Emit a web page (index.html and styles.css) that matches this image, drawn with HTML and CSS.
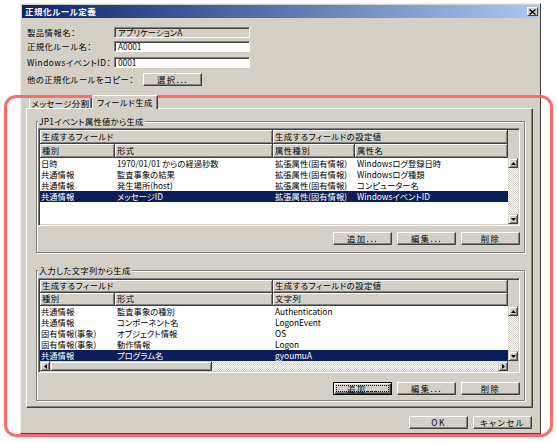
FILE: index.html
```html
<!DOCTYPE html>
<html lang="ja">
<head>
<meta charset="UTF-8">
<title>正規化ルール定義</title>
<link rel="stylesheet" href="styles.css">
</head>
<body>

<div class="window">
  <div class="titlebar">
    <span class="title">正規化ルール定義</span>
    <span class="close"><svg width="7" height="6" viewBox="0 0 7 6"><path d="M0.5 0.5 L6.5 5.5 M6.5 0.5 L0.5 5.5" stroke="#000" stroke-width="1.5"/></svg></span>
  </div>

  <div class="content">
    <div class="form">
      <div class="frow"><span class="flabel">製品情報名：</span><span class="field readonly">アプリケーションA</span></div>
      <div class="frow"><span class="flabel">正規化ルール名：</span><span class="field">A0001</span></div>
      <div class="frow"><span class="flabel">WindowsイベントID：</span><span class="field">0001</span></div>
      <div class="frow copy"><span class="flabel">他の正規化ルールをコピー：</span><span class="btn">選択...</span></div>
    </div>

    <div class="tabs">
      <div class="tab">メッセージ分割</div>
      <div class="tab active">フィールド生成</div>
    </div>

    <div class="panel">
      <!-- JP1イベント属性値から -->
      <div class="group">
        <div class="group-title">JP1イベント属性値から生成</div>
        <div class="list list-attr">
          <div class="hrow">
            <div class="hcell w-field">生成するフィールド</div>
            <div class="hcell w-value">生成するフィールドの設定値</div>
          </div>
          <div class="hrow">
            <div class="hcell w-kind">種別</div>
            <div class="hcell w-form">形式</div>
            <div class="hcell w-akind">属性種別</div>
            <div class="hcell w-aname">属性名</div>
          </div>
          <div class="lbody">
            <div class="rows">
              <div class="lrow"><span class="cell w-kind">日時</span><span class="cell w-form">1970/01/01 からの経過秒数</span><span class="cell w-akind">拡張属性(固有情報)</span><span class="cell w-aname">Windowsログ登録日時</span></div>
              <div class="lrow"><span class="cell w-kind">共通情報</span><span class="cell w-form">監査事象の結果</span><span class="cell w-akind">拡張属性(固有情報)</span><span class="cell w-aname">Windowsログ種類</span></div>
              <div class="lrow"><span class="cell w-kind">共通情報</span><span class="cell w-form">発生場所(host)</span><span class="cell w-akind">拡張属性(固有情報)</span><span class="cell w-aname">コンピューター名</span></div>
              <div class="lrow selected"><span class="cell w-kind">共通情報</span><span class="cell w-form">メッセージID</span><span class="cell w-akind">拡張属性(固有情報)</span><span class="cell w-aname">WindowsイベントID</span></div>
            </div>
            <div class="vscroll">
              <span class="sbtn"><svg width="5" height="3" viewBox="0 0 5 3"><path d="M2.5 0 L5 3 H0 Z"/></svg></span>
              <span class="track"></span>
              <span class="sbtn"><svg width="5" height="3" viewBox="0 0 5 3"><path d="M0 0 H5 L2.5 3 Z"/></svg></span>
            </div>
          </div>
        </div>
        <div class="btnbar">
          <span class="btn">追加...</span>
          <span class="btn">編集...</span>
          <span class="btn">削除</span>
        </div>
      </div>

      <!-- 入力した文字列から -->
      <div class="group">
        <div class="group-title">入力した文字列から生成</div>
        <div class="list list-text">
          <div class="hrow">
            <div class="hcell w-field">生成するフィールド</div>
            <div class="hcell w-value">生成するフィールドの設定値</div>
          </div>
          <div class="hrow">
            <div class="hcell w-kind">種別</div>
            <div class="hcell w-form">形式</div>
            <div class="hcell w-str">文字列</div>
          </div>
          <div class="lbody">
            <div class="rows">
              <div class="lrow"><span class="cell w-kind">共通情報</span><span class="cell w-form">監査事象の種別</span><span class="cell w-str">Authentication</span></div>
              <div class="lrow"><span class="cell w-kind">共通情報</span><span class="cell w-form">コンポーネント名</span><span class="cell w-str">LogonEvent</span></div>
              <div class="lrow"><span class="cell w-kind">固有情報(事象)</span><span class="cell w-form">オブジェクト情報</span><span class="cell w-str">OS</span></div>
              <div class="lrow"><span class="cell w-kind">固有情報(事象)</span><span class="cell w-form">動作情報</span><span class="cell w-str">Logon</span></div>
              <div class="lrow selected"><span class="cell w-kind">共通情報</span><span class="cell w-form">プログラム名</span><span class="cell w-str">gyoumuA</span></div>
            </div>
            <div class="vscroll">
              <span class="sbtn"><svg width="5" height="3" viewBox="0 0 5 3"><path d="M2.5 0 L5 3 H0 Z"/></svg></span>
              <span class="track"></span>
              <span class="sbtn"><svg width="5" height="3" viewBox="0 0 5 3"><path d="M0 0 H5 L2.5 3 Z"/></svg></span>
            </div>
          </div>
          <div class="hscroll">
            <span class="sbtn"><svg width="3" height="5" viewBox="0 0 3 5"><path d="M0 2.5 L3 0 V5 Z"/></svg></span>
            <span class="thumb"></span>
            <span class="track"></span>
            <span class="sbtn"><svg width="3" height="5" viewBox="0 0 3 5"><path d="M0 0 L3 2.5 L0 5 Z"/></svg></span>
            <span class="corner"></span>
          </div>
        </div>
        <div class="btnbar">
          <span class="btn default"><span class="focus">追加...</span></span>
          <span class="btn">編集...</span>
          <span class="btn">削除</span>
        </div>
      </div>
    </div>

    <div class="footer">
      <span class="btn">OK</span>
      <span class="btn">キャンセル</span>
    </div>
  </div>
</div>

<div class="highlight"></div>

</body>
</html>
```

FILE: styles.css
```css
* { box-sizing: border-box; }

body {
    margin: 0;
    background: #fff;
    font-family: "Noto Sans CJK JP", "Noto Sans", sans-serif;
    font-size: 8.3px;
    font-feature-settings: "palt";
    line-height: 11px;
    color: #000;
}

/* window frame */
.window {
    width: 521px;
    margin: 3px 0 0 20px;
    padding: 1px;
    background: #d4d0c8;
    border: 1px solid;
    border-color: #f0efeb #404040 #404040 #f0efeb;
}
.titlebar {
    height: 13px;
    display: flex;
    align-items: center;
    justify-content: space-between;
    padding: 0 1px 0 3px;
    background: linear-gradient(to right, #0a246a, #a6caf0);
}
.title {
    color: #fff;
    font-weight: bold;
    font-size: 8.5px;
    letter-spacing: 0.5px;
}
.close {
    width: 11px;
    height: 9px;
    display: flex;
    align-items: center;
    justify-content: center;
    background: #d4d0c8;
    border: 1px solid;
    border-color: #fff #404040 #404040 #fff;
}
.content { padding: 9px 6px 3px 4px; }

/* top form */
.form { padding-left: 1px; }
.frow {
    display: flex;
    align-items: center;
    height: 11px;
    margin-bottom: 5px;
}
.frow:first-child { margin-bottom: 3px; }
.frow.copy { height: 13px; margin-bottom: 9px; }
.flabel { width: 87px; white-space: nowrap; letter-spacing: 0.5px; }
.copy .flabel { width: 116px; }
.field {
    width: 136px;
    height: 11px;
    padding-left: 3px;
    line-height: 9px;
    white-space: nowrap;
    background: #fff;
    border: 1px solid;
    border-color: #808080 #fff #fff #808080;
    box-shadow: inset 1px 1px #404040;
}
.field.readonly { background: #d4d0c8; }

/* buttons */
.btn {
    width: 59px;
    height: 13px;
    display: flex;
    align-items: center;
    justify-content: center;
    letter-spacing: 1.5px;
    white-space: nowrap;
    background: #d4d0c8;
    border: 1px solid;
    border-color: #fff #404040 #404040 #fff;
    box-shadow: inset -1px -1px #808080;
}
.btn.default {
    border-color: #000;
    box-shadow: inset 1px 1px #fff, inset -1px -1px #404040, inset -2px -2px #808080;
    padding: 2px;
}
.focus {
    flex: 1;
    align-self: stretch;
    display: flex;
    align-items: center;
    justify-content: center;
    border: 1px dotted #000;
}
.btnbar {
    display: flex;
    justify-content: flex-end;
    gap: 5px;
    margin-top: 6px;
}
.footer {
    display: flex;
    justify-content: flex-end;
    gap: 5px;
    margin-top: 8px;
    padding-right: 1px;
}

/* tabs */
.tabs {
    display: flex;
    align-items: flex-end;
    height: 13px;
    padding-left: 3px;
}
.tab {
    width: 63px;
    height: 11px;
    line-height: 10px;
    text-align: center;
    white-space: nowrap;
    letter-spacing: 0.5px;
    border: 1px solid;
    border-bottom: none;
    border-color: #fff #404040 #404040 #fff;
    border-radius: 2px 2px 0 0;
    box-shadow: inset -1px 0 #808080;
}
.tab.active {
    width: 66px;
    height: 14px;
    line-height: 12px;
    margin-bottom: -1px;
    position: relative;
    z-index: 1;
    background: #d4d0c8;
}
.panel {
    height: 300px;
    padding: 12px 7px 6px 9px;
    border: 1px solid;
    border-color: #fff #404040 #404040 #fff;
    box-shadow: inset -1px -1px #808080;
}

/* group boxes */
.group {
    padding: 0 4px 7px 1px;
    border: 1px solid #808080;
    box-shadow: inset 1px 1px #fff, 1px 1px #fff;
}
.group + .group {
    margin-top: 17px;
    padding-bottom: 5px;
}
.group-title {
    display: table;
    margin: -6px 0 0 0;
    padding: 0 1px;
    background: #d4d0c8;
    white-space: nowrap;
    letter-spacing: 0.3px;
}

/* list views */
.list {
    margin-top: 1px;
    padding: 1px;
    background: #fff;
    border: 1px solid;
    border-color: #808080 #fff #fff #808080;
    box-shadow: inset 1px 1px #404040, inset -1px -1px #d4d0c8;
}
.list-text { margin-top: 2px; }
.list-text + .btnbar { margin-top: 9px; }

.hrow {
    display: flex;
    height: 14px;
    background: #d4d0c8;
}
.list-text .hrow { height: 13px; }
.hcell {
    height: 100%;
    padding-left: 2px;
    line-height: 12px;
    white-space: nowrap;
    overflow: hidden;
    letter-spacing: 0.5px;
    border-right: 1px solid #404040;
    border-bottom: 1px solid #404040;
    box-shadow: inset 1px 1px #fff, inset -1px -1px #808080;
}
.list-text .hcell { line-height: 11px; }

.w-field { width: 233px; }
.w-value { width: 235px; }
.w-kind { width: 75px; }
.w-form { width: 158px; }
.w-akind { width: 82px; }
.w-aname { width: 153px; }
.w-str { width: 235px; }

.lbody {
    display: flex;
    height: 66px;
}
.list-text .lbody { height: 55px; }
.rows { flex: 1; }
.lrow {
    display: flex;
    height: 11px;
}
.lrow.selected {
    background: #0a1e5c;
    color: #fff;
}
.cell {
    padding-left: 2px;
    white-space: nowrap;
    overflow: hidden;
}
.cell.w-kind { padding-left: 1px; }

/* scroll bars */
.vscroll {
    width: 10px;
    display: flex;
    flex-direction: column;
}
.hscroll {
    display: flex;
    height: 10px;
}
.track {
    flex: 1;
    background: repeating-conic-gradient(#fff 0 25%, #d4d0c8 0 50%) 0 0 / 2px 2px;
}
.sbtn, .thumb {
    width: 10px;
    height: 10px;
    display: flex;
    align-items: center;
    justify-content: center;
    background: #d4d0c8;
    border: 1px solid;
    border-color: #d4d0c8 #404040 #404040 #d4d0c8;
    box-shadow: inset 1px 1px #fff, inset -1px -1px #808080;
}
.thumb { width: 162px; }
.corner {
    width: 10px;
    background: #d4d0c8;
}

/* red callout */
.highlight {
    position: absolute;
    left: 4px;
    top: 95px;
    width: 549px;
    height: 342px;
    border: 3px solid #ff6b6b;
    border-radius: 12px;
}
```
